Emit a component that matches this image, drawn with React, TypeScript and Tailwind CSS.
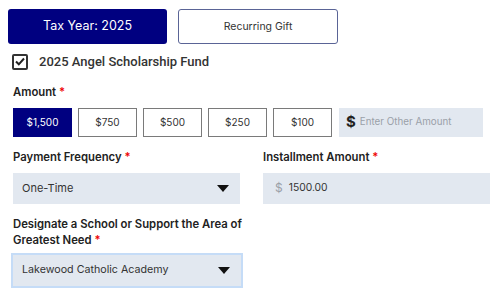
import { useState } from "react";

const amounts = ["$1,500", "$750", "$500", "$250", "$100"];

function Caret() {
  return (
    <svg width="12" height="7" viewBox="0 0 12 7" className="shrink-0">
      <path d="M0 0h12L6 7z" fill="#111" />
    </svg>
  );
}

function Label({ children }: { children: React.ReactNode }) {
  return (
    <div className="text-[11.3px] font-semibold leading-[16px] text-[#222]">
      {children}
      <span className="text-[#e00]">&nbsp;*</span>
    </div>
  );
}

export default function App() {
  const [selected, setSelected] = useState("$1,500");
  const [checked, setChecked] = useState(true);

  return (
    <div className="h-[300px] w-[500px] bg-white font-['Inter',sans-serif] text-[#222]">
      <div className="flex gap-[11px] pl-[8px] pt-[9px]">
        <button className="h-[35px] w-[159px] rounded-[3px] bg-[#000080] text-[12.5px] text-white">
          Tax Year: 2025
        </button>
        <button className="h-[35px] w-[160px] rounded-[3px] border border-[#5a6496] text-[10.5px] text-[#333]">
          Recurring Gift
        </button>
      </div>

      <label className="mt-[8px] flex items-center gap-[11px] pl-[12px]">
        <span
          onClick={() => setChecked(!checked)}
          className="flex h-[16px] w-[16px] items-center justify-center rounded-[2px] border-2 border-[#333]"
        >
          {checked && (
            <svg width="10" height="9" viewBox="0 0 10 9">
              <path d="M1 4.5 3.8 7.3 9 1.5" fill="none" stroke="#222" strokeWidth="2" />
            </svg>
          )}
        </span>
        <span className="font-['Roboto',sans-serif] text-[13px] font-medium text-[#333]">
          2025 Angel Scholarship Fund
        </span>
      </label>

      <div className="mt-[12px] pl-[13px]">
        <Label>Amount</Label>
      </div>

      <div className="mt-[8px] flex items-center gap-[6px] pl-[13px]">
        {amounts.map((a) => (
          <button
            key={a}
            onClick={() => setSelected(a)}
            className={
              selected === a
                ? "h-[29px] w-[59px] bg-[#000080] text-[10px] text-white"
                : "h-[29px] w-[59px] border-[1.5px] border-[#7a7a7a] bg-white text-[10px] text-[#333]"
            }
          >
            {a}
          </button>
        ))}
        <div className="ml-[1px] flex h-[29px] w-[144px] items-center gap-[4px] bg-[#e2e8f0] pl-[7px]">
          <span className="text-[15px] font-bold text-[#222]">$</span>
          <span className="text-[9.8px] text-[#9aa0a8]">Enter Other Amount</span>
        </div>
      </div>

      <div className="mt-[12px] grid grid-cols-[227px_227px] gap-x-[23px] pl-[13px]">
        <div>
          <Label>Payment Frequency</Label>
          <div className="mt-[8px] flex h-[31px] items-center justify-between bg-[#e2e8f0] pl-[9px] pr-[11px]">
            <span className="text-[11px] text-[#333]">One-Time</span>
            <Caret />
          </div>
        </div>
        <div>
          <Label>Installment Amount</Label>
          <div className="mt-[8px] flex h-[31px] items-center gap-[6px] bg-[#e2e8f0] pl-[12px]">
            <span className="text-[12px] text-[#9aa0a8]">$</span>
            <span className="text-[10.3px] text-[#333]">1500.00</span>
          </div>
        </div>
      </div>

      <div className="mt-[12px] w-[243px] pl-[13px]">
        <Label>
          Designate a School or Support the Area of Greatest Need
        </Label>
      </div>
      <div className="ml-[11px] mt-[5px] flex h-[35px] w-[232px] items-center justify-between border-2 border-[#c5dcf7] bg-[#e2e8f0] pl-[9px] pr-[11px]">
        <span className="text-[10.7px] text-[#333]">Lakewood Catholic Academy</span>
        <Caret />
      </div>
    </div>
  );
}
